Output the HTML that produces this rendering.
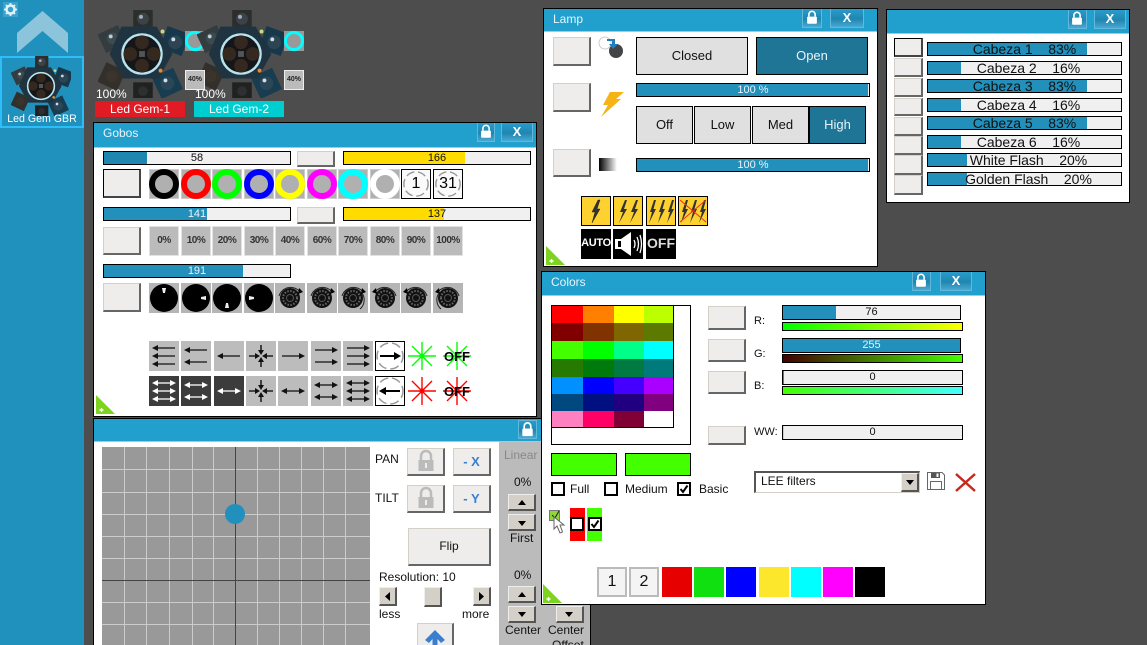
<!DOCTYPE html>
<html><head><meta charset="utf-8"><title>Fixture control</title>
<style>
html,body{margin:0;padding:0;width:1147px;height:645px;overflow:hidden}
body{position:relative;background:#4d4d4d;font:12px "Liberation Sans",sans-serif;color:#111}
div,span,svg{position:absolute;box-sizing:border-box;display:block}
.w{background:#fff;border:1px solid #000;overflow:hidden}
.t{background:#22a0cd;color:#eef;font-size:12px;border-bottom:1px solid #8fd0ea}
.tl{color:#e8f4fa;font-size:12px;line-height:14px}
.tb{background:linear-gradient(#2a9ccb,#1f86b0 55%,#48a9d2);border:1px solid #62b7da;border-top:0;color:#fff;text-align:center}
.b{background:#eeedeb;border:1px solid #d4d0c8;border-right:2px solid #666;border-bottom:2px solid #666}
.s{background:#f0f0f0;border:1px solid #000;text-align:center;font-size:11px;line-height:12px;overflow:hidden;color:#111}
.s i{position:absolute;left:0;top:0;bottom:0;background:#2290bb}
.s u{position:absolute;left:0;right:0;top:0;text-decoration:none}
.s.y i{background:#ffdc00}
.wt u{color:#e8f4fa}
.g{background:#b0b0b0;border:1px solid #ccc;width:30px;height:30px}
.g b{position:absolute;box-sizing:border-box;left:-1px;top:-1px;width:30px;height:30px;border-radius:50%;border:6px solid #000;display:block}
.p{background:#bbb;border:1px solid #e2e2e2;width:30px;height:30px;font-weight:bold;font-size:10px;letter-spacing:-.5px;text-align:center;line-height:27px;color:#333}
.k{border:1px solid #000;background:#fafafa;width:30px;height:30px;text-align:center;font-size:16px;line-height:27px;color:#000}
.k svg{left:0;top:0}
.d{background:#e0e0e0;border:1px solid #000;text-align:center;font-size:13px;color:#111;line-height:36px}
.d.on{background:#1e7596;color:#e8f4fa}
.x{font-size:12px;white-space:nowrap;line-height:14px;color:#111}
.c{border:2px solid #000;background:#fff;width:14px;height:14px}
.up{background:#d4d0c8;border:1px solid #eee;border-right:2px solid #555;border-bottom:2px solid #555}
.q{width:30px;height:30px}
</style></head><body>
<svg width="0" height="0" style="left:0;top:0">
<defs>
<symbol id="fx" viewBox="0 0 90 90">
<g><rect x="36" y="0" width="20" height="18" fill="#2c2e2e"/><rect x="3" y="19" width="23" height="21" fill="#333d40" transform="rotate(-25 15 30)"/><rect x="66" y="20" width="24" height="24" fill="#17384a" transform="rotate(20 79 33)"/><rect x="3" y="57" width="22" height="22" fill="#33302b" transform="rotate(25 14 68)"/><rect x="59" y="63" width="24" height="24" fill="#183c50" transform="rotate(-25 71 75)"/><rect x="36" y="74" width="20" height="16" fill="#202121"/></g>
<circle cx="46" cy="9" r="6" fill="#3a4448"/><circle cx="44" cy="7" r="2" fill="#aab"/><circle cx="15" cy="29" r="6" fill="#3d4a4f"/><circle cx="13" cy="27" r="2" fill="#bcd"/><circle cx="79" cy="33" r="7" fill="#2d4552"/><circle cx="77" cy="30" r="2" fill="#cde"/><circle cx="14" cy="68" r="6" fill="#3b342c"/><circle cx="71" cy="75" r="7" fill="#2b4656"/><circle cx="69" cy="72" r="2" fill="#cde"/><circle cx="46" cy="83" r="5" fill="#2e2f30"/>
<path d="M24 17L60 17L76 45L62 70L26 70L12 45Z" fill="#1f3340"/>
<circle cx="45" cy="45" r="20" fill="#14161a" stroke="#b7e4ef" stroke-width="2.500"/>
<g fill="#35291f"><circle cx="45" cy="33" r="7"/><circle cx="33" cy="45" r="7"/><circle cx="57" cy="45" r="7"/><circle cx="45" cy="57" r="7"/></g>
<rect x="42" y="42" width="6" height="6" fill="#555"/><circle cx="66" cy="22" r="2" fill="#cdd980"/><circle cx="64" cy="62" r="2" fill="#e58a2a"/>
</symbol>
<symbol id="lk" viewBox="0 0 18 18"><path d="M5.500 8V5.500a3.500 3.500 0 0 1 7 0V8" fill="none" stroke="#fff" stroke-width="1.800"/><rect x="3.500" y="8" width="11" height="8" rx="1" fill="#fff"/></symbol>
<symbol id="gl" viewBox="0 0 38 27"><path d="M14 12V8a5 5 0 0 1 10 0V12" fill="none" stroke="#bbb" stroke-width="2.500"/><rect x="11.500" y="12" width="15" height="11" fill="#bbb"/><rect x="18" y="15" width="2" height="5" fill="#eee"/></symbol>
<symbol id="gr" viewBox="0 0 30 30"><circle cx="15" cy="15" r="10" fill="#111"/><circle cx="15" cy="15" r="7" fill="none" stroke="#666" stroke-width="2" stroke-dasharray="1.500 1.500"/><circle cx="15" cy="15" r="3.500" fill="none" stroke="#555"/></symbol>
<symbol id="cw" viewBox="0 0 30 30"><use href="#gr"/><path d="M4 13A12 12 0 0 1 25 9" fill="none" stroke="#222"/><path d="M24 5l4 4-5 2z" fill="#000"/></symbol>
<symbol id="bolt" viewBox="0 0 30 30"><path d="M17 4L11 16H14L11 27L19 13H16L19 4Z" fill="#333" stroke="#111" stroke-width=".4"/></symbol>
<symbol id="bolt2" viewBox="0 0 30 30"><path d="M12 4L7 16H10L6 27L14 13H11L14 4Z" fill="#333"/><path d="M23 4L18 16H21L17 27L25 13H22L25 4Z" fill="#333"/></symbol>
<symbol id="bolt3" viewBox="0 0 30 30"><path d="M8 4L4 16H6L3 27L10 13H7.500L10 4Z" fill="#333"/><path d="M17 4L13 16H15L12 27L19 13H16.500L19 4Z" fill="#333"/><path d="M26 4L22 16H24L21 27L28 13H25.500L28 4Z" fill="#333"/></symbol>
<symbol id="al" viewBox="0 0 30 10"><path d="M7 5H26" stroke="#111" stroke-width="1.300"/><path d="M3 5L9 2V8Z" fill="#111"/></symbol>
<symbol id="ar" viewBox="0 0 30 10"><path d="M4 5H23" stroke="#111" stroke-width="1.300"/><path d="M27 5L21 2V8Z" fill="#111"/></symbol>
<symbol id="ab" viewBox="0 0 30 10"><path d="M7 5H23" stroke="#111" stroke-width="1.300"/><path d="M3 5L9 2V8Z M27 5L21 2V8Z" fill="#111"/></symbol>
<symbol id="aw" viewBox="0 0 30 10"><path d="M7 5H23" stroke="#fff" stroke-width="1.300"/><path d="M3 5L9 2V8Z M27 5L21 2V8Z" fill="#fff"/></symbol>
<symbol id="in" viewBox="0 0 30 30"><path d="M15 4V12M15 18V26M3 15H11M19 15H27" stroke="#222" stroke-width="1.600"/><path d="M15 14L12 9H18ZM15 16L12 21H18ZM14 15L9 12V18ZM16 15L21 12V18Z" fill="#111"/></symbol>
<symbol id="st" viewBox="0 0 30 30"><path d="M15 1V29M1 15H29M5 5L25 25M25 5L5 25" stroke="currentColor" stroke-width="1.400"/><circle cx="15" cy="15" r="2.500" fill="currentColor"/></symbol>
<symbol id="dash" viewBox="0 0 30 30"><circle cx="15" cy="15" r="13" fill="none" stroke="#999" stroke-width="1.500" stroke-dasharray="9 4" stroke-dashoffset="2"/></symbol>
<symbol id="tri" viewBox="0 0 19 19"><path d="M0 0L19 19H0Z" fill="#7ed321"/><path d="M5.500 13V17M3.500 15H7.500" stroke="#fff" stroke-width="1.400"/></symbol>
</defs>
</svg>

<!-- sidebar -->
<div style="left:0;top:0;width:84px;height:645px;background:#2091bd"></div>
<div style="left:3px;top:2px;width:15px;height:15px;background:#3ba2cb"></div>
<svg style="left:3px;top:2px" width="15" height="15" viewBox="0 0 15 15"><circle cx="7.500" cy="7.500" r="4" fill="none" stroke="#e4f2f8" stroke-width="2.500"/><path d="M7.500 1V14M1 7.500H14M3 3L12 12M12 3L3 12" stroke="#e4f2f8" stroke-width="1.800" stroke-dasharray="2.500 8 2.500"/></svg>
<svg style="left:17px;top:11px" width="51" height="42" viewBox="0 0 51 42"><path d="M25.500 0L51 22V42L25.500 20L0 42V22Z" fill="#8cc5db"/></svg>
<div style="left:0;top:56px;width:84px;height:72px;border:2px solid #2dbdf9"></div>
<svg style="left:11px;top:56px" width="60" height="60"><use href="#fx" width="60" height="60"/></svg>
<div style="left:0;top:112px;width:84px;text-align:center;color:#fff;font-size:10.6px;line-height:14px">Led Gem GBR</div>

<!-- fixtures -->
<svg style="left:98px;top:10px" width="88" height="88"><use href="#fx" width="88" height="88"/></svg>
<div style="left:185px;top:31px;width:19px;height:20px;background:#999"></div>
<div style="left:185px;top:31px;width:20px;height:20px;border:3px solid #0ff;border-radius:50%"></div>
<svg style="left:197px;top:10px" width="88" height="88"><use href="#fx" width="88" height="88"/></svg>
<div style="left:185px;top:70px;width:20px;height:20px;background:#bbb;border:1px solid #eee;font:bold 7px 'Liberation Sans',sans-serif;text-align:center;line-height:18px;color:#222">40%</div>
<div style="left:284px;top:31px;width:20px;height:20px;background:#999"></div>
<div style="left:284px;top:31px;width:20px;height:20px;border:3px solid #0ff;border-radius:50%"></div>
<div style="left:284px;top:70px;width:20px;height:20px;background:#bbb;border:1px solid #eee;font:bold 7px 'Liberation Sans',sans-serif;text-align:center;line-height:18px;color:#222">40%</div>
<div class="x" style="left:96px;top:87px;color:#fff">100%</div>
<div class="x" style="left:195px;top:87px;color:#fff">100%</div>
<div style="left:95px;top:101px;width:90px;height:16px;background:#e01b24;color:#fff;text-align:center;font-size:12px;line-height:16px">Led Gem-1</div>
<div style="left:194px;top:101px;width:90px;height:16px;background:#00cdd0;color:#fff;text-align:center;font-size:12px;line-height:16px">Led Gem-2</div>

<!-- GOBOS -->
<div class="w" style="left:93px;top:122px;width:444px;height:295px"></div>
<div class="t" style="left:94px;top:123px;width:442px;height:25px"></div>
<div class="tl" style="left:103px;top:126px">Gobos</div>
<div class="tb" style="left:477px;top:123px;width:18px;height:19px"><svg style="left:0;top:0" width="16" height="17"><use href="#lk" width="16" height="17"/></svg></div>
<div class="tb" style="left:501px;top:123px;width:32px;height:19px;font:bold 13px 'Liberation Sans',sans-serif;line-height:17px">X</div>

<div class="s" style="left:103px;top:151px;width:188px;height:14px"><i style="width:43px;background:#1f86b0"></i><u>58</u></div>
<div class="b" style="left:297px;top:151px;width:38px;height:16px"></div>
<div class="s y" style="left:343px;top:151px;width:188px;height:14px"><i style="width:121px"></i><u>166</u></div>
<div class="b" style="left:103px;top:169px;width:38px;height:29px;border:1px solid #000;border-right:2px solid #444;border-bottom:2px solid #444"></div>
<div class="g" style="left:149px;top:169px"><b style="border-color:#000"></b></div>
<div class="g" style="left:181px;top:169px"><b style="border-color:#f00"></b></div>
<div class="g" style="left:212px;top:169px"><b style="border-color:#0f0"></b></div>
<div class="g" style="left:244px;top:169px"><b style="border-color:#00f"></b></div>
<div class="g" style="left:275px;top:169px"><b style="border-color:#ff0"></b></div>
<div class="g" style="left:307px;top:169px"><b style="border-color:#f0f"></b></div>
<div class="g" style="left:338px;top:169px"><b style="border-color:#0ff"></b></div>
<div class="g" style="left:370px;top:169px"><b style="border-color:#fff"></b></div>
<div class="k" style="left:401px;top:169px"><svg width="28" height="28"><use href="#dash" width="28" height="28"/></svg>1</div>
<div class="k" style="left:433px;top:169px"><svg width="28" height="28"><use href="#dash" width="28" height="28"/></svg>31</div>

<div class="s wt" style="left:103px;top:207px;width:188px;height:14px"><i style="width:103px"></i><u>141</u></div>
<div class="b" style="left:297px;top:207px;width:38px;height:17px"></div>
<div class="s y" style="left:343px;top:207px;width:188px;height:14px"><i style="width:100px"></i><u>137</u></div>
<div class="b" style="left:103px;top:227px;width:38px;height:28px"></div>
<div class="p" style="left:149px;top:226px">0%</div>
<div class="p" style="left:181px;top:226px">10%</div>
<div class="p" style="left:212px;top:226px">20%</div>
<div class="p" style="left:244px;top:226px">30%</div>
<div class="p" style="left:275px;top:226px">40%</div>
<div class="p" style="left:307px;top:226px">60%</div>
<div class="p" style="left:338px;top:226px">70%</div>
<div class="p" style="left:370px;top:226px">80%</div>
<div class="p" style="left:401px;top:226px">90%</div>
<div class="p" style="left:433px;top:226px">100%</div>

<div class="s wt" style="left:103px;top:264px;width:188px;height:14px"><i style="width:139px"></i><u>191</u></div>
<div class="b" style="left:103px;top:283px;width:38px;height:29px"></div>
<svg style="left:149px;top:283px;background:#b5b5b5" width="30" height="30"><circle cx="15" cy="15" r="14" fill="#000"/><path d="M13 5h4l-1 5h-2z" fill="#eee"/></svg>
<svg style="left:181px;top:283px;background:#b5b5b5" width="30" height="30"><circle cx="15" cy="15" r="14" fill="#000"/><path d="M25 13v4l-5-1v-2z" fill="#eee"/></svg>
<svg style="left:212px;top:283px;background:#b5b5b5" width="30" height="30"><circle cx="15" cy="15" r="14" fill="#000"/><path d="M13 25h4l-1-5h-2z" fill="#eee"/></svg>
<svg style="left:244px;top:283px;background:#b5b5b5" width="30" height="30"><circle cx="15" cy="15" r="14" fill="#000"/><path d="M5 13v4l5-1v-2z" fill="#eee"/></svg>
<svg style="left:275px;top:283px;background:#b5b5b5" width="30" height="30"><use href="#cw" width="30" height="30"/></svg>
<svg style="left:307px;top:283px;background:#b5b5b5" width="30" height="30"><use href="#cw" width="30" height="30"/></svg>
<svg style="left:338px;top:283px;background:#b5b5b5" width="30" height="30"><use href="#cw" width="30" height="30"/><path d="M24 10A12 12 0 0 1 22 26" fill="none" stroke="#222"/></svg>
<svg style="left:370px;top:283px;background:#b5b5b5" width="30" height="30"><g transform="matrix(-1 0 0 1 30 0)"><use href="#cw" width="30" height="30"/></g></svg>
<svg style="left:401px;top:283px;background:#b5b5b5" width="30" height="30"><g transform="matrix(-1 0 0 1 30 0)"><use href="#cw" width="30" height="30"/></g></svg>
<svg style="left:433px;top:283px;background:#b5b5b5" width="30" height="30"><g transform="matrix(-1 0 0 1 30 0)"><use href="#cw" width="30" height="30"/><path d="M24 10A12 12 0 0 1 22 26" fill="none" stroke="#222"/></g></svg>

<!-- arrows row 1 -->
<svg class="q" style="left:149px;top:341px;background:#bcbcbc"><use href="#al" y="2" width="30" height="10"/><use href="#al" y="10" width="30" height="10"/><use href="#al" y="18" width="30" height="10"/></svg>
<svg class="q" style="left:181px;top:341px;background:#bcbcbc"><use href="#al" y="4" width="30" height="10"/><use href="#al" y="16" width="30" height="10"/></svg>
<svg class="q" style="left:214px;top:341px;background:#bcbcbc"><use href="#al" y="10" width="30" height="10"/></svg>
<svg class="q" style="left:246px;top:341px;background:#bcbcbc"><use href="#in" width="30" height="30"/></svg>
<svg class="q" style="left:278px;top:341px;background:#bcbcbc"><use href="#ar" y="10" width="30" height="10"/></svg>
<svg class="q" style="left:311px;top:341px;background:#bcbcbc"><use href="#ar" y="4" width="30" height="10"/><use href="#ar" y="16" width="30" height="10"/></svg>
<svg class="q" style="left:343px;top:341px;background:#bcbcbc"><use href="#ar" y="2" width="30" height="10"/><use href="#ar" y="10" width="30" height="10"/><use href="#ar" y="18" width="30" height="10"/></svg>
<svg class="q" style="left:375px;top:341px;background:#fff;outline:1px solid #000;outline-offset:-1px"><use href="#dash" width="30" height="30"/><path d="M5 15H20" stroke="#000" stroke-width="2"/><path d="M26 15L19 11V19Z"/></svg>
<svg class="q" style="left:407px;top:341px;color:#0f0"><use href="#st" width="30" height="30"/></svg>
<svg class="q" style="left:442px;top:341px;color:#0f0"><use href="#st" width="30" height="30"/><text x="15" y="20" text-anchor="middle" font-family="Liberation Sans" font-weight="bold" font-size="13" fill="#000">OFF</text></svg>
<!-- arrows row 2 -->
<svg class="q" style="left:149px;top:376px;background:#3c3c3c"><use href="#aw" y="2" width="30" height="10"/><use href="#aw" y="10" width="30" height="10"/><use href="#aw" y="18" width="30" height="10"/></svg>
<svg class="q" style="left:181px;top:376px;background:#3c3c3c"><use href="#aw" y="4" width="30" height="10"/><use href="#aw" y="16" width="30" height="10"/></svg>
<svg class="q" style="left:214px;top:376px;background:#3c3c3c"><use href="#aw" y="10" width="30" height="10"/></svg>
<svg class="q" style="left:246px;top:376px;background:#bcbcbc"><use href="#in" width="30" height="30"/></svg>
<svg class="q" style="left:278px;top:376px;background:#bcbcbc"><use href="#ab" y="10" width="30" height="10"/></svg>
<svg class="q" style="left:311px;top:376px;background:#bcbcbc"><use href="#ab" y="4" width="30" height="10"/><use href="#ab" y="16" width="30" height="10"/></svg>
<svg class="q" style="left:343px;top:376px;background:#bcbcbc"><use href="#ab" y="2" width="30" height="10"/><use href="#ab" y="10" width="30" height="10"/><use href="#ab" y="18" width="30" height="10"/></svg>
<svg class="q" style="left:375px;top:376px;background:#fff;outline:1px solid #000;outline-offset:-1px"><use href="#dash" width="30" height="30"/><path d="M10 15H25" stroke="#000" stroke-width="2"/><path d="M4 15L11 11V19Z"/></svg>
<svg class="q" style="left:407px;top:376px;color:#f00"><use href="#st" width="30" height="30"/></svg>
<svg class="q" style="left:442px;top:376px;color:#f00"><use href="#st" width="30" height="30"/><text x="15" y="20" text-anchor="middle" font-family="Liberation Sans" font-weight="bold" font-size="13" fill="#000">OFF</text></svg>
<svg style="left:96px;top:395px" width="19" height="19"><use href="#tri" width="19" height="19"/></svg>

<!-- LAMP -->
<div class="w" style="left:543px;top:8px;width:335px;height:259px"></div>
<div class="t" style="left:544px;top:9px;width:333px;height:23px"></div>
<div class="tl" style="left:553px;top:12px">Lamp</div>
<div class="tb" style="left:802px;top:9px;width:20px;height:19px"><svg style="left:1px;top:0" width="16" height="17"><use href="#lk" width="16" height="17"/></svg></div>
<div class="tb" style="left:830px;top:9px;width:34px;height:19px;font:bold 13px 'Liberation Sans',sans-serif;line-height:17px">X</div>
<div class="b" style="left:553px;top:37px;width:38px;height:29px"></div>
<svg style="left:598px;top:36px" width="28" height="26"><circle cx="7" cy="7" r="6" fill="#fff" stroke="#ccc"/><circle cx="18" cy="15" r="7" fill="#444"/><path d="M9 3H17V8H20L15 13L11 8H14V5H9Z" fill="#1d7fc0"/></svg>
<div class="d" style="left:636px;top:37px;width:112px;height:38px">Closed</div>
<div class="d on" style="left:756px;top:37px;width:112px;height:38px">Open</div>
<div class="b" style="left:553px;top:83px;width:38px;height:29px"></div>
<svg style="left:600px;top:92px" width="24" height="25"><path d="M10 0H24L16 7H21L1 25L8 13H3Z" fill="#f5b316"/></svg>
<div class="s wt" style="left:636px;top:83px;width:234px;height:14px"><i style="right:1px"></i><u>100 %</u></div>
<div class="d" style="left:636px;top:106px;width:57px;height:38px">Off</div>
<div class="d" style="left:694px;top:106px;width:57px;height:38px">Low</div>
<div class="d" style="left:752px;top:106px;width:57px;height:38px">Med</div>
<div class="d on" style="left:809px;top:106px;width:57px;height:38px">High</div>
<div class="b" style="left:553px;top:149px;width:38px;height:28px"></div>
<div style="left:599px;top:158px;width:18px;height:13px;background:linear-gradient(90deg,#000,#fff)"></div>
<div class="s wt" style="left:636px;top:158px;width:234px;height:14px"><i style="right:1px"></i><u>100 %</u></div>
<svg class="q" style="left:581px;top:196px;background:#fdd130;outline:1px solid #000;outline-offset:-1px"><use href="#bolt" width="30" height="30"/></svg>
<svg class="q" style="left:613px;top:196px;background:#fdd130;outline:1px solid #000;outline-offset:-1px"><use href="#bolt2" width="30" height="30"/></svg>
<svg class="q" style="left:646px;top:196px;background:#fdd130;outline:1px solid #000;outline-offset:-1px"><use href="#bolt3" width="30" height="30"/></svg>
<svg class="q" style="left:678px;top:196px;background:#fdd130;outline:1px solid #000;outline-offset:-1px"><use href="#bolt3" width="30" height="30"/><path d="M2 26L28 4M2 4L28 26" stroke="#f03020"/></svg>
<div style="left:581px;top:229px;width:30px;height:30px;background:#000;color:#fff;font:bold 11px/29px 'Liberation Sans',sans-serif;text-align:center;letter-spacing:-.3px">AUTO</div>
<svg class="q" style="left:613px;top:229px;background:#000"><path d="M2 10H8L18 3V27L8 20H2Z" fill="#fff"/><path d="M5 12V18H8V12Z" fill="#000"/><path d="M21 11Q23 15 21 19M24 8Q27 15 24 22M27 6Q30 15 27 24" fill="none" stroke="#fff" stroke-width="1.300"/></svg>
<div style="left:646px;top:229px;width:30px;height:30px;background:#000;color:#ddd;font:bold 14px/29px 'Liberation Sans',sans-serif;text-align:center">OFF</div>
<svg style="left:546px;top:246px" width="19" height="19"><use href="#tri" width="19" height="19"/></svg>

<!-- CABEZA -->
<div class="w" style="left:886px;top:9px;width:244px;height:194px"></div>
<div class="t" style="left:887px;top:10px;width:242px;height:24px"></div>
<div class="tb" style="left:1068px;top:10px;width:19px;height:19px"><svg style="left:0;top:0" width="16" height="17"><use href="#lk" width="16" height="17"/></svg></div>
<div class="tb" style="left:1094px;top:10px;width:32px;height:19px;font:bold 13px 'Liberation Sans',sans-serif;line-height:17px">X</div>
<div class="b" style="left:894px;top:38px;width:29px;height:19px;border:1px solid #000;border-right:2px solid #444;border-bottom:2px solid #444"></div>
<div class="b" style="left:894px;top:58px;width:29px;height:19px"></div>
<div class="b" style="left:894px;top:78px;width:29px;height:19px"></div>
<div class="b" style="left:894px;top:98px;width:29px;height:18px"></div>
<div class="b" style="left:894px;top:117px;width:29px;height:19px"></div>
<div class="b" style="left:894px;top:136px;width:29px;height:19px"></div>
<div class="b" style="left:894px;top:155px;width:29px;height:20px"></div>
<div class="b" style="left:894px;top:175px;width:29px;height:20px"></div>
<div class="s" style="left:927px;top:42px;width:195px;height:14px;font-size:14px"><i style="width:159px"></i><u style="white-space:pre">Cabeza 1    83%</u></div>
<div class="s" style="left:927px;top:61px;width:195px;height:14px;font-size:14px"><i style="width:33px"></i><u style="white-space:pre;left:8px">Cabeza 2    16%</u></div>
<div class="s" style="left:927px;top:79px;width:195px;height:14px;font-size:14px"><i style="width:159px"></i><u style="white-space:pre">Cabeza 3    83%</u></div>
<div class="s" style="left:927px;top:98px;width:195px;height:14px;font-size:14px"><i style="width:33px"></i><u style="white-space:pre;left:8px">Cabeza 4    16%</u></div>
<div class="s" style="left:927px;top:116px;width:195px;height:14px;font-size:14px"><i style="width:159px"></i><u style="white-space:pre">Cabeza 5    83%</u></div>
<div class="s" style="left:927px;top:135px;width:195px;height:14px;font-size:14px"><i style="width:33px"></i><u style="white-space:pre;left:8px">Cabeza 6    16%</u></div>
<div class="s" style="left:927px;top:153px;width:195px;height:14px;font-size:14px"><i style="width:39px"></i><u style="white-space:pre;left:8px">White Flash    20%</u></div>
<div class="s" style="left:927px;top:172px;width:195px;height:14px;font-size:14px"><i style="width:39px"></i><u style="white-space:pre;left:8px">Golden Flash    20%</u></div>

<!-- PAN/TILT -->
<div class="w" style="left:93px;top:418px;width:498px;height:240px"></div>
<div class="t" style="left:94px;top:419px;width:496px;height:23px"></div>
<div class="tb" style="left:518px;top:420px;width:19px;height:19px;border-top:1px solid #62b7da"><svg style="left:0;top:0" width="17" height="17"><use href="#lk" width="17" height="17"/></svg></div>
<svg style="left:102px;top:447px" width="268" height="198"><rect width="268" height="198" fill="#999"/>
<path d="M22.500 0V198M44.500 0V198M67.500 0V198M90.500 0V198M111.500 0V198M155.500 0V198M177.500 0V198M199.500 0V198M221.500 0V198M243.500 0V198M0 22.500H268M0 45.500H268M0 67.500H268M0 89.500H268M0 111.500H268M0 155.500H268M0 177.500H268" stroke="#ccc" fill="none"/>
<path d="M133.500 0V198M0 133.500H268" stroke="#444" fill="none"/><circle cx="133" cy="67" r="10" fill="#2190bd"/></svg>
<div class="x" style="left:375px;top:452px">PAN</div>
<div class="b" style="left:407px;top:448px;width:38px;height:28px"><svg style="left:-1px;top:-1px" width="38" height="27"><use href="#gl" width="38" height="27"/></svg></div>
<div class="b" style="left:453px;top:448px;width:38px;height:28px;color:#3a7fcf;font:bold 13px/25px 'Liberation Sans',sans-serif;text-align:center">- X</div>
<div class="x" style="left:375px;top:491px">TILT</div>
<div class="b" style="left:407px;top:485px;width:38px;height:28px"><svg style="left:-1px;top:-1px" width="38" height="27"><use href="#gl" width="38" height="27"/></svg></div>
<div class="b" style="left:453px;top:485px;width:38px;height:28px;color:#3a7fcf;font:bold 13px/25px 'Liberation Sans',sans-serif;text-align:center">- Y</div>
<div class="b" style="left:408px;top:528px;width:83px;height:38px;font-size:12px;text-align:center;line-height:35px">Flip</div>
<div class="x" style="left:379px;top:570px">Resolution: 10</div>
<div class="up" style="left:379px;top:587px;width:18px;height:19px"></div>
<svg style="left:385px;top:592px" width="6" height="9"><path d="M5 0V9L0 4.500Z"/></svg>
<div class="up" style="left:424px;top:587px;width:18px;height:20px"></div>
<div class="up" style="left:473px;top:587px;width:18px;height:19px"></div>
<svg style="left:479px;top:592px" width="6" height="9"><path d="M0 0V9L5 4.500Z"/></svg>
<div class="x" style="left:379px;top:607px">less</div>
<div class="x" style="left:462px;top:607px">more</div>
<div class="b" style="left:417px;top:623px;width:37px;height:30px"></div>
<svg style="left:425px;top:630px" width="20" height="16"><path d="M10 0L20 10L16 13L12.500 9V16H7.500V9L4 13L0 10Z" fill="#3a7fcf"/></svg>
<div style="left:499px;top:442px;width:91px;height:203px;background:#bbb"></div>
<div class="x" style="left:504px;top:448px;color:#888">Linear</div>
<div class="x" style="left:514px;top:475px">0%</div>
<div class="up" style="left:508px;top:494px;width:28px;height:17px"></div>
<svg style="left:518px;top:500px" width="8" height="5"><path d="M4 0L8 5H0Z"/></svg>
<div class="up" style="left:508px;top:514px;width:28px;height:17px"></div>
<svg style="left:518px;top:521px" width="8" height="5"><path d="M4 5L8 0H0Z"/></svg>
<div class="x" style="left:510px;top:531px">First</div>
<div class="x" style="left:514px;top:568px">0%</div>
<div class="up" style="left:508px;top:586px;width:28px;height:17px"></div>
<svg style="left:518px;top:592px" width="8" height="5"><path d="M4 0L8 5H0Z"/></svg>
<div class="up" style="left:508px;top:606px;width:28px;height:17px"></div>
<svg style="left:518px;top:612px" width="8" height="5"><path d="M4 5L8 0H0Z"/></svg>
<div class="up" style="left:556px;top:606px;width:28px;height:17px"></div>
<svg style="left:565px;top:612px" width="8" height="5"><path d="M4 5L8 0H0Z"/></svg>
<div class="x" style="left:505px;top:623px">Center</div>
<div class="x" style="left:548px;top:623px">Center</div>
<div class="x" style="left:552px;top:638px">Offset</div>

<!-- COLORS -->
<div class="w" style="left:541px;top:271px;width:445px;height:334px"></div>
<div class="t" style="left:542px;top:272px;width:443px;height:24px"></div>
<div class="tl" style="left:551px;top:275px">Colors</div>
<div class="tb" style="left:912px;top:272px;width:19px;height:19px"><svg style="left:0;top:0" width="16" height="17"><use href="#lk" width="16" height="17"/></svg></div>
<div class="tb" style="left:940px;top:272px;width:32px;height:19px;font:bold 13px 'Liberation Sans',sans-serif;line-height:17px">X</div>
<div style="left:551px;top:305px;width:140px;height:140px;border:1px solid #000"></div>
<svg style="left:551px;top:305px" width="123" height="123" shape-rendering="crispEdges"><rect width="123" height="123" fill="#000"/>
<rect x="1" y="1" width="31" height="17" fill="#f00"/><rect x="32" y="1" width="31" height="17" fill="#ff8000"/><rect x="63" y="1" width="30" height="17" fill="#ff0"/><rect x="93" y="1" width="29" height="17" fill="#bf0"/>
<rect x="1" y="18" width="31" height="18" fill="#800000"/><rect x="32" y="18" width="31" height="18" fill="#803300"/><rect x="63" y="18" width="30" height="18" fill="#806600"/><rect x="93" y="18" width="29" height="18" fill="#5c7a00"/>
<rect x="1" y="36" width="31" height="18" fill="#4f0"/><rect x="32" y="36" width="31" height="18" fill="#0f0"/><rect x="63" y="36" width="30" height="18" fill="#0f8"/><rect x="93" y="36" width="29" height="18" fill="#0ff"/>
<rect x="1" y="54" width="31" height="18" fill="#267a00"/><rect x="32" y="54" width="31" height="18" fill="#007a0a"/><rect x="63" y="54" width="30" height="18" fill="#007a40"/><rect x="93" y="54" width="29" height="18" fill="#007a7a"/>
<rect x="1" y="72" width="31" height="17" fill="#0090ff"/><rect x="32" y="72" width="31" height="17" fill="#00f"/><rect x="63" y="72" width="30" height="17" fill="#40f"/><rect x="93" y="72" width="29" height="17" fill="#a0f"/>
<rect x="1" y="89" width="31" height="17" fill="#004880"/><rect x="32" y="89" width="31" height="17" fill="#001080"/><rect x="63" y="89" width="30" height="17" fill="#200080"/><rect x="93" y="89" width="29" height="17" fill="#800080"/>
<rect x="1" y="106" width="31" height="16" fill="#ff80c0"/><rect x="32" y="106" width="31" height="16" fill="#f06"/><rect x="63" y="106" width="30" height="16" fill="#800035"/><rect x="93" y="106" width="29" height="16" fill="#fff"/></svg>
<div class="b" style="left:708px;top:306px;width:38px;height:24px"></div>
<div class="b" style="left:708px;top:339px;width:38px;height:23px"></div>
<div class="b" style="left:708px;top:371px;width:38px;height:23px"></div>
<div class="b" style="left:708px;top:426px;width:38px;height:19px"></div>
<div class="x" style="left:754px;top:314px;font-size:11px">R:</div>
<div class="x" style="left:754px;top:347px;font-size:11px">G:</div>
<div class="x" style="left:754px;top:379px;font-size:11px">B:</div>
<div class="x" style="left:754px;top:425px;font-size:11px">WW:</div>
<div class="s" style="left:782px;top:305px;width:179px;height:15px"><i style="width:53px"></i><u>76</u></div>
<div style="left:782px;top:322px;width:181px;height:9px;border:1px solid #000;background:linear-gradient(90deg,#0f0,#ff0)"></div>
<div class="s wt" style="left:782px;top:338px;width:179px;height:15px"><i style="right:0"></i><u>255</u></div>
<div style="left:782px;top:354px;width:181px;height:9px;border:1px solid #000;background:linear-gradient(90deg,#400,#4f0)"></div>
<div class="s" style="left:782px;top:370px;width:181px;height:15px"><i style="width:1px"></i><u>0</u></div>
<div style="left:782px;top:386px;width:181px;height:9px;border:1px solid #000;background:linear-gradient(90deg,#4f0,#4ff)"></div>
<div class="s y" style="left:782px;top:425px;width:181px;height:15px"><i style="width:1px"></i><u>0</u></div>
<div style="left:551px;top:453px;width:66px;height:23px;background:#4f0;border:1px solid #000"></div>
<div style="left:625px;top:453px;width:66px;height:23px;background:#4f0;border:1px solid #000"></div>
<div class="c" style="left:551px;top:482px"></div>
<div class="x" style="left:570px;top:482px;font-size:12px">Full</div>
<div class="c" style="left:604px;top:482px"></div>
<div class="x" style="left:625px;top:482px;font-size:12px">Medium</div>
<div class="c" style="left:677px;top:482px"></div>
<svg style="left:679px;top:484px" width="10" height="10"><path d="M1.500 5L4 8L8.500 1.500" fill="none" stroke="#000" stroke-width="2"/></svg>
<div class="x" style="left:699px;top:482px;font-size:12px">Basic</div>
<div style="left:754px;top:471px;width:166px;height:22px;border:1px solid #d4d0c8;border-top:2px solid #555;border-left:2px solid #555;font-size:12px;line-height:16px;padding-left:5px">LEE filters</div>
<div class="up" style="left:901px;top:473px;width:18px;height:19px"></div>
<svg style="left:906px;top:480px" width="8" height="5"><path d="M4 5L8 0H0Z"/></svg>
<svg style="left:927px;top:472px" width="18" height="18"><path d="M.500.500H15L17.500 3V17.500H.500Z" fill="#fff" stroke="#666"/><rect x="4" y="1" width="9" height="5" fill="#555"/><rect x="9.500" y="1.500" width="2" height="3.500" fill="#fff"/><rect x="3.500" y="9.500" width="11" height="8" fill="#fff" stroke="#666"/></svg>
<svg style="left:954px;top:473px" width="23" height="19"><path d="M2 1L21 18M21 1L2 18" stroke="#c8281a" stroke-width="2.500"/></svg>
<div style="left:570px;top:508px;width:15px;height:33px;background:#f00"></div>
<div style="left:587px;top:508px;width:15px;height:33px;background:#4f0"></div>
<div class="c" style="left:570px;top:517px"></div>
<div class="c" style="left:588px;top:517px"></div>
<svg style="left:590px;top:519px" width="10" height="10"><path d="M1.500 5L4 8L8.500 1.500" fill="none" stroke="#000" stroke-width="2"/></svg>
<div style="left:549px;top:510px;width:11px;height:11px;background:#8fd63a;border:1px solid #777"></div>
<svg style="left:550px;top:509px" width="16" height="25"><path d="M2 6L5 9L9 2" fill="none" stroke="#222"/><path d="M4 8V20L7 17L10 24L12.500 23L10 16H14Z" fill="#fff" stroke="#666"/></svg>
<div style="left:597px;top:567px;width:30px;height:30px;background:#f4f4f4;border:2px solid #bbb;text-align:center;font-size:16px;line-height:26px">1</div>
<div style="left:629px;top:567px;width:30px;height:30px;background:#f4f4f4;border:2px solid #bbb;text-align:center;font-size:16px;line-height:26px">2</div>
<div style="left:662px;top:567px;width:30px;height:30px;background:#e60000"></div>
<div style="left:694px;top:567px;width:30px;height:30px;background:#10e010"></div>
<div style="left:726px;top:567px;width:30px;height:30px;background:#00f"></div>
<div style="left:759px;top:567px;width:30px;height:30px;background:#fce72c"></div>
<div style="left:791px;top:567px;width:30px;height:30px;background:#0ff"></div>
<div style="left:823px;top:567px;width:30px;height:30px;background:#f0f"></div>
<div style="left:855px;top:567px;width:30px;height:30px;background:#000"></div>
<svg style="left:543px;top:584px" width="19" height="19"><use href="#tri" width="19" height="19"/></svg>
</body></html>
